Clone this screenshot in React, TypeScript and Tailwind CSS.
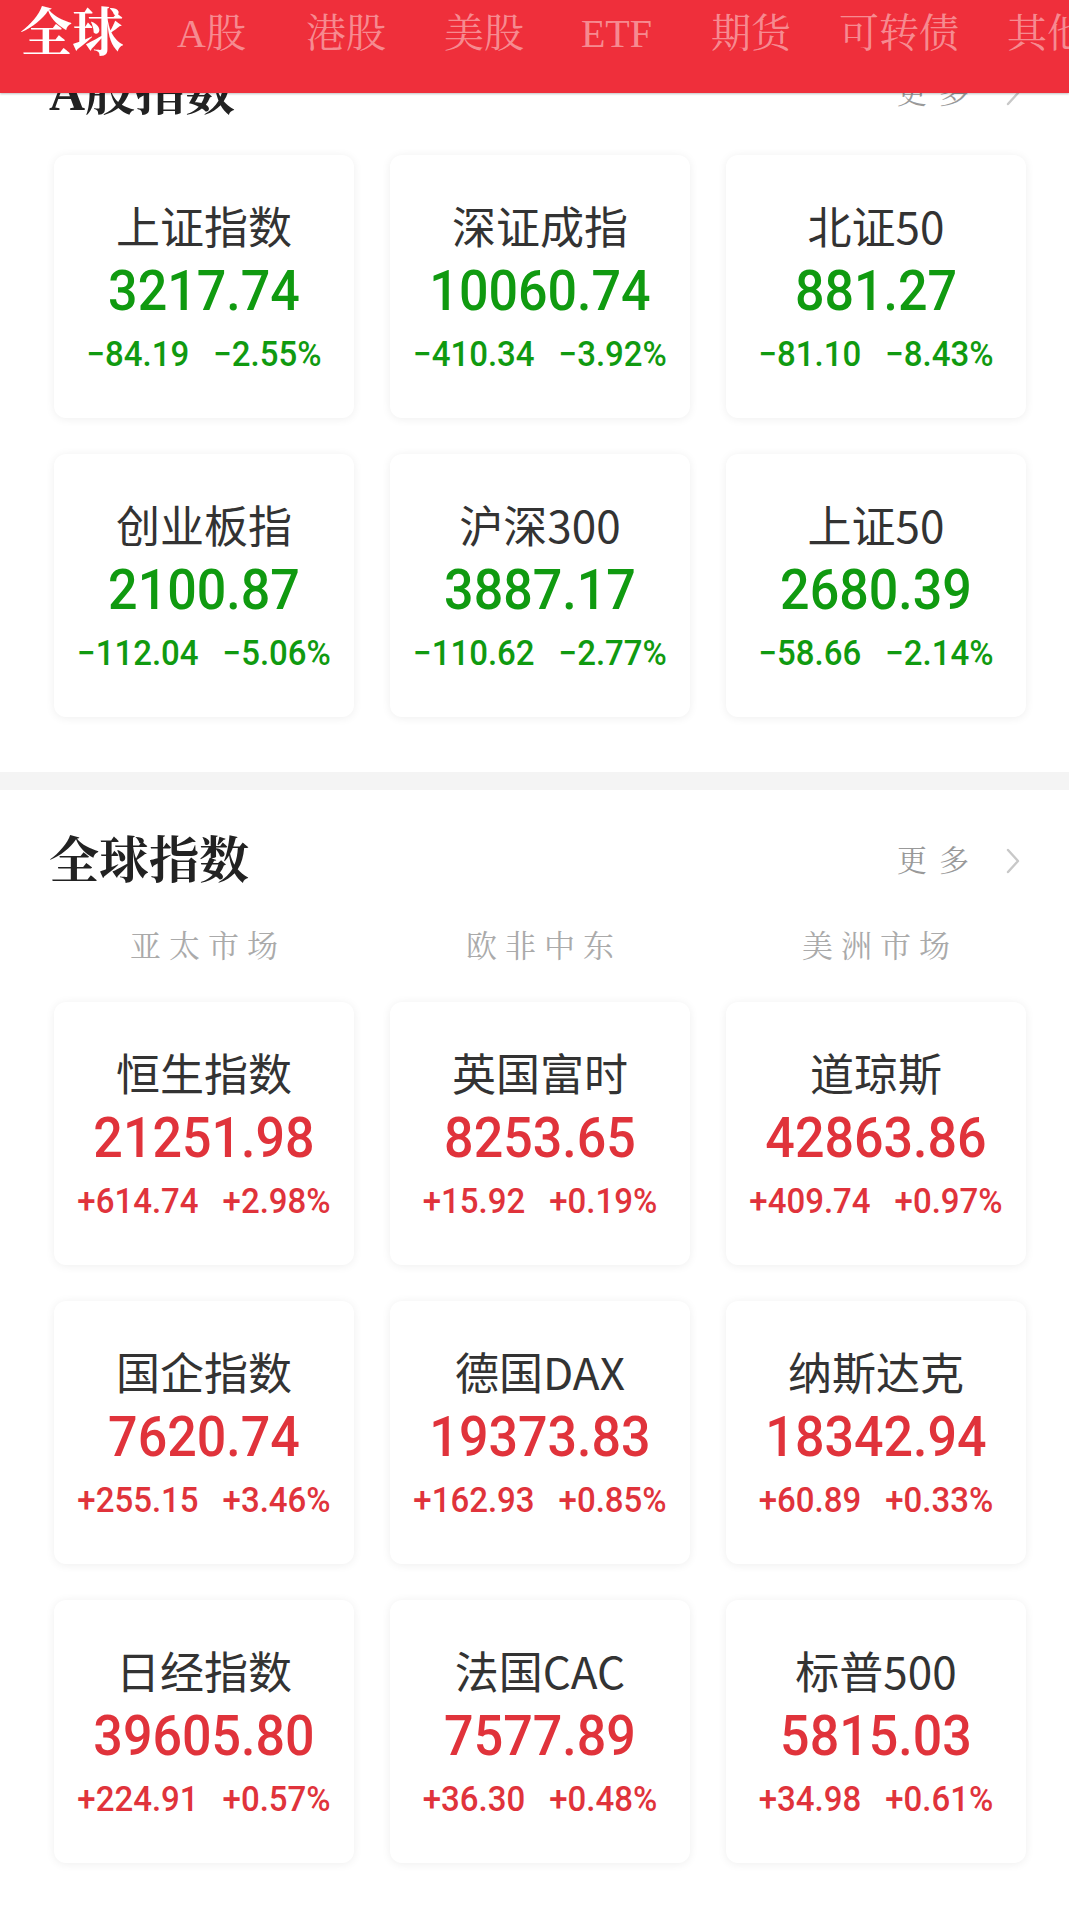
import React from "react";

type Item = { name: string; value: string; chg: string; pct: string };

const aShare: Item[] = [
  { name: "上证指数", value: "3217.74", chg: "−84.19", pct: "−2.55%" },
  { name: "深证成指", value: "10060.74", chg: "−410.34", pct: "−3.92%" },
  { name: "北证50", value: "881.27", chg: "−81.10", pct: "−8.43%" },
  { name: "创业板指", value: "2100.87", chg: "−112.04", pct: "−5.06%" },
  { name: "沪深300", value: "3887.17", chg: "−110.62", pct: "−2.77%" },
  { name: "上证50", value: "2680.39", chg: "−58.66", pct: "−2.14%" },
];

const globalIdx: Item[] = [
  { name: "恒生指数", value: "21251.98", chg: "+614.74", pct: "+2.98%" },
  { name: "英国富时", value: "8253.65", chg: "+15.92", pct: "+0.19%" },
  { name: "道琼斯", value: "42863.86", chg: "+409.74", pct: "+0.97%" },
  { name: "国企指数", value: "7620.74", chg: "+255.15", pct: "+3.46%" },
  { name: "德国DAX", value: "19373.83", chg: "+162.93", pct: "+0.85%" },
  { name: "纳斯达克", value: "18342.94", chg: "+60.89", pct: "+0.33%" },
  { name: "日经指数", value: "39605.80", chg: "+224.91", pct: "+0.57%" },
  { name: "法国CAC", value: "7577.89", chg: "+36.30", pct: "+0.48%" },
  { name: "标普500", value: "5815.03", chg: "+34.98", pct: "+0.61%" },
];

const serif =
  "font-['Liberation_Serif','Noto_Serif_CJK_SC','AR_PL_UKai_CN','Noto_Sans_CJK_SC',serif]";

function Card({ item, up }: { item: Item; up: boolean }) {
  const color = up ? "text-[#e0333b]" : "text-[#109a10]";
  return (
    <div className="h-[263px] rounded-[12px] bg-white shadow-[0_1px_10px_rgba(0,0,0,0.07)] flex flex-col items-center pt-[48px]">
      <div className="text-[44px] leading-[44px] text-[#333333] font-['Noto_Sans_CJK_SC','Noto_Sans',sans-serif] whitespace-nowrap">
        {item.name}
      </div>
      <div
        className={`mt-[19px] text-[52px] leading-[52px] font-medium font-['Roboto',sans-serif] scale-y-[1.08] ${color}`}
      >
        {item.value}
      </div>
      <div
        className={`mt-[20px] flex gap-[24px] text-[33px] leading-[32px] font-medium font-['Roboto',sans-serif] scale-y-[1.06] ${color}`}
      >
        <span>{item.chg}</span>
        <span>{item.pct}</span>
      </div>
    </div>
  );
}

function More() {
  return (
    <div className="flex items-center">
      <span className={`text-[30px] leading-[40px] tracking-[12px] text-[#999999] ${serif}`}>
        更多
      </span>
      <svg
        width="16"
        height="26"
        viewBox="0 0 16 26"
        className="ml-[24px]"
        fill="none"
        stroke="#c8c8c8"
        strokeWidth="2.4"
        strokeLinecap="round"
        strokeLinejoin="round"
      >
        <path d="M3 2 L13 13 L3 24" />
      </svg>
    </div>
  );
}

function SectionTitle({ title }: { title: string }) {
  return (
    <div className="h-[60px] flex items-center justify-between pl-[49px] pr-[48px]">
      <span className={`text-[50px] leading-[60px] font-bold text-[#222222] ${serif}`}>{title}</span>
      <More />
    </div>
  );
}

const tabs: { t: string; ml: string }[] = [
  { t: "A股", ml: "ml-[53px]" },
  { t: "港股", ml: "ml-[60px]" },
  { t: "美股", ml: "ml-[58px]" },
  { t: "ETF", ml: "ml-[57px]" },
  { t: "期货", ml: "ml-[59px]" },
  { t: "可转债", ml: "ml-[48px]" },
  { t: "其他", ml: "ml-[48px]" },
];

export default function App() {
  return (
    <div className="w-[1069px] h-[1916px] overflow-hidden bg-white">
      {/* Header */}
      <div className="relative z-10 h-[93px] bg-[#ef2f3b] shadow-[0_1px_2px_rgba(0,0,0,0.25)] overflow-hidden">
        <div className={`h-[68px] flex items-center pl-[20px] whitespace-nowrap ${serif}`}>
          <span className="text-[52px] leading-[60px] font-bold text-white">全球</span>
          {tabs.map(({ t, ml }) => (
            <span key={t} className={`${ml} text-[40px] leading-[50px] text-white/45`}>
              {t}
            </span>
          ))}
        </div>
      </div>

      {/* A股指数 */}
      <div className="relative z-0 -mt-[30px] pb-[55px]">
        <SectionTitle title="A股指数" />
        <div className="mt-[32px] grid grid-cols-3 gap-[36px] pl-[54px] pr-[43px]">
          {aShare.map((it) => (
            <Card key={it.name} item={it} up={false} />
          ))}
        </div>
      </div>

      <div className="h-[18px] bg-[#f4f4f4]" />

      {/* 全球指数 */}
      <div className="pt-[41px]">
        <SectionTitle title="全球指数" />
        <div className="mt-[36px] grid grid-cols-3 gap-[36px] pl-[54px] pr-[43px]">
          {["亚太市场", "欧非中东", "美洲市场"].map((s) => (
            <div
              key={s}
              className={`h-[40px] flex items-center justify-center text-[31px] tracking-[8px] text-[#aaaaaa] ${serif}`}
            >
              <span className="-mr-[8px]">{s}</span>
            </div>
          ))}
        </div>
        <div className="mt-[35px] grid grid-cols-3 gap-[36px] pl-[54px] pr-[43px]">
          {globalIdx.map((it) => (
            <Card key={it.name} item={it} up={true} />
          ))}
        </div>
      </div>
    </div>
  );
}
